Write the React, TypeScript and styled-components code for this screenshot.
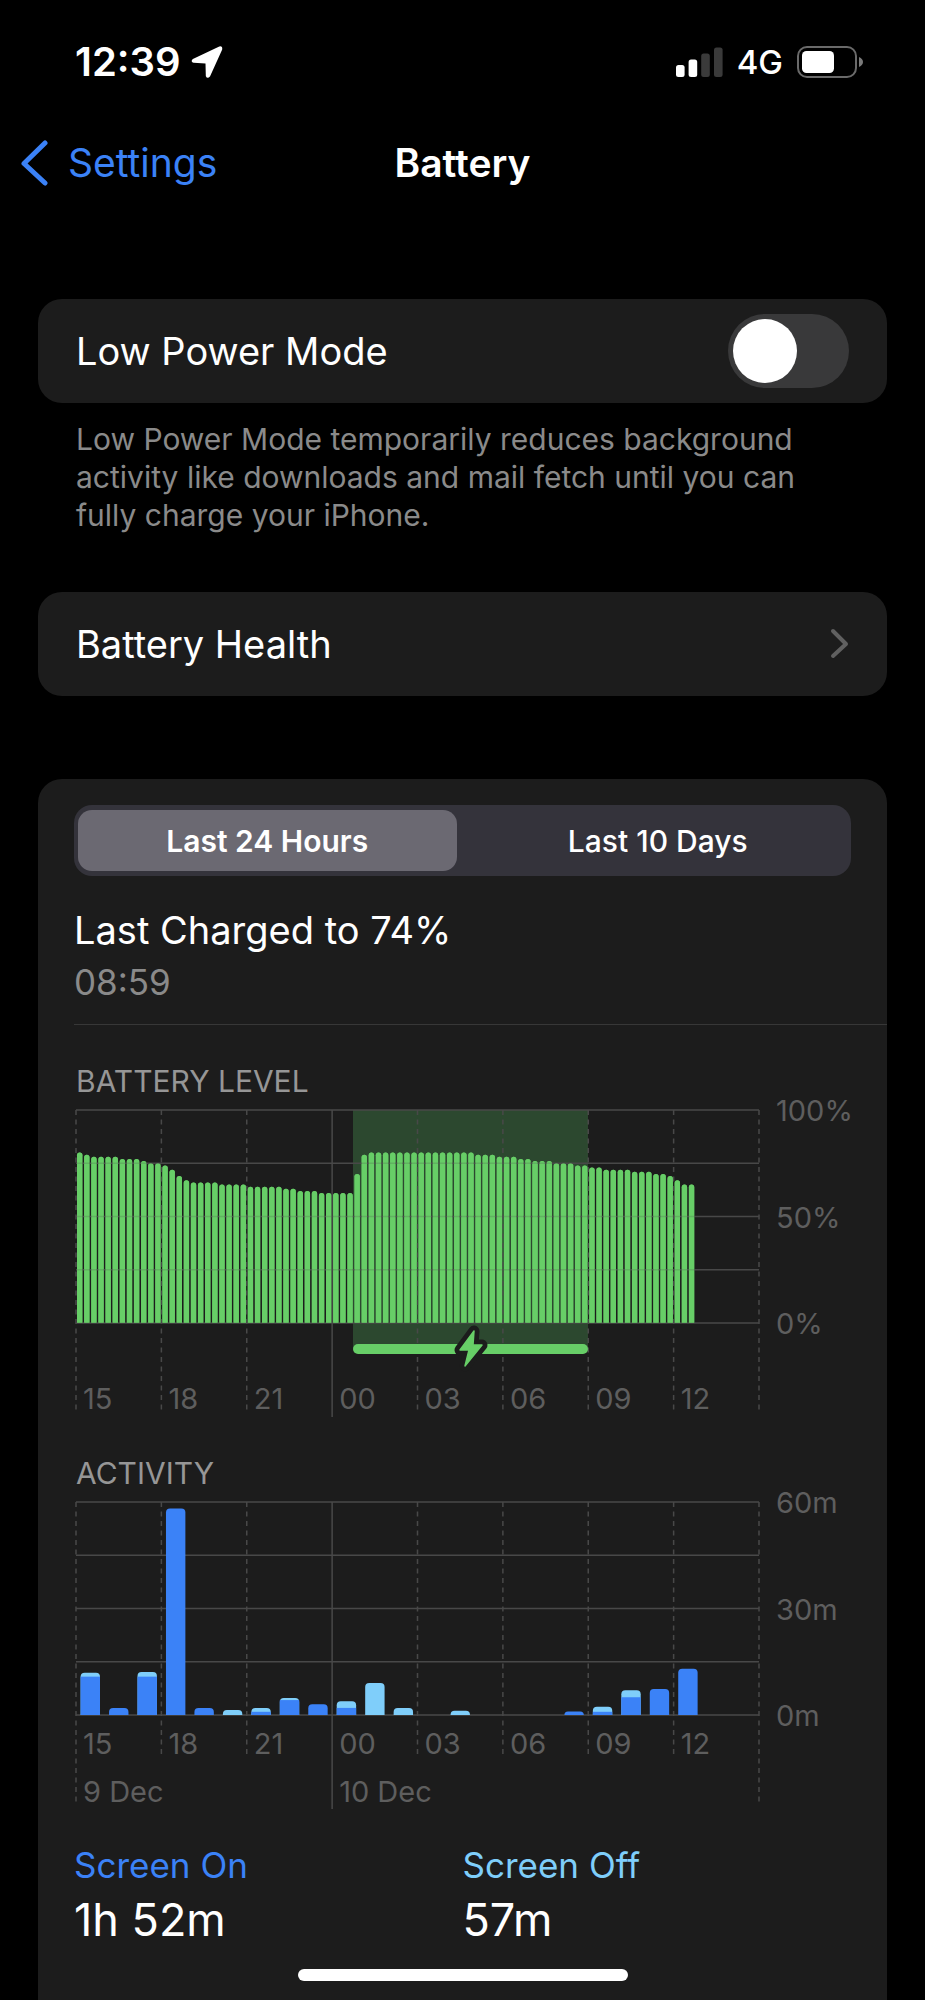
import React, { useState } from "react";
import styled, { createGlobalStyle } from "styled-components";

const color = {
  card: "#1c1c1c",
  blue: "#3b82f7",
  sky: "#7fcefa",
  green: "#67ce67",
  text: "#ffffff",
  secondary: "#8a8a8a",
  heading: "#969696",
  axis: "#5e5e5e",
  grid: "#484848",
};

const GlobalStyle = createGlobalStyle`
  *, *::before, *::after { box-sizing: border-box; }
  body {
    margin: 0;
    background: #000;
    color: ${color.text};
    font-family: Inter, "Liberation Sans", sans-serif;
  }
  button { font-family: inherit; }
`;

const Screen = styled.div`
  min-height: 100vh;
  display: flex;
  flex-direction: column;
`;

const StatusBar = styled.div`
  display: flex;
  align-items: center;
  justify-content: space-between;
  height: 86px;
  padding: 38px 61px 0 75px;
`;

const StatusGroup = styled.div<{ $gap: number }>`
  display: flex;
  align-items: center;
  gap: ${(p) => p.$gap}px;
`;

const Clock = styled.time`
  font-size: 40px;
  font-weight: 600;
  line-height: 48px;
`;

const Network = styled.span`
  font-size: 33px;
  font-weight: 500;
  line-height: 48px;
`;

const NavBar = styled.header`
  display: grid;
  grid-template-columns: 1fr auto 1fr;
  align-items: center;
  height: 60px;
  margin-top: 47px;
  padding: 0 20px;
`;

const BackLink = styled.a`
  display: flex;
  align-items: center;
  gap: 19px;
  color: ${color.blue};
  font-size: 39px;
  line-height: 48px;
  text-decoration: none;
`;

const PageTitle = styled.h1`
  margin: 0;
  font-size: 39px;
  font-weight: 600;
  line-height: 48px;
`;

const Main = styled.main`
  flex: 1;
  display: flex;
  flex-direction: column;
  padding: 106px 38px 0;
`;

const Row = styled.div`
  display: flex;
  align-items: center;
  justify-content: space-between;
  height: 104px;
  padding: 0 38px;
  border-radius: 24px;
  background: ${color.card};
  color: ${color.text};
  font-size: 38px;
  line-height: 48px;
  text-decoration: none;
`;

const Switch = styled.input`
  appearance: none;
  display: flex;
  align-items: center;
  width: 121px;
  height: 74px;
  margin: 0;
  padding: 5px;
  border-radius: 37px;
  background: #39393a;
  cursor: pointer;

  &::before {
    content: "";
    width: 64px;
    height: 64px;
    border-radius: 50%;
    background: #fff;
  }
  &:checked {
    justify-content: flex-end;
    background: ${color.green};
  }
`;

const Footnote = styled.p`
  margin: 17px 38px 58px;
  color: ${color.secondary};
  font-size: 30px;
  line-height: 38px;
`;

const UsageCard = styled.section`
  flex: 1;
  margin-top: 83px;
  padding: 26px 0 52px 36px;
  border-radius: 24px 24px 0 0;
  background: ${color.card};
`;

const Segmented = styled.div`
  display: flex;
  gap: 12px;
  height: 71px;
  margin-right: 36px;
  padding: 5px 4px;
  border-radius: 18px;
  background: #34333b;
`;

const Segment = styled.button<{ $active: boolean }>`
  flex: 1;
  border: 0;
  border-radius: 14px;
  background: ${(p) => (p.$active ? "#6b6972" : "transparent")};
  color: ${color.text};
  font-size: 30px;
  font-weight: ${(p) => (p.$active ? 600 : 500)};
  cursor: pointer;
`;

const ChargeSummary = styled.div`
  display: flex;
  flex-direction: column;
  gap: 6px;
  padding: 30px 0 20px;
  border-bottom: 1px solid #373737;
`;

const ChargeTitle = styled.h2`
  margin: 0;
  font-size: 38px;
  font-weight: 400;
  line-height: 48px;
`;

const ChargeTime = styled.time`
  color: ${color.secondary};
  font-size: 35px;
  line-height: 44px;
`;

const ChartBlock = styled.section`
  padding-top: 44px;
`;

const ChartTitle = styled.h3`
  margin: 0 0 0 2px;
  color: ${color.heading};
  font-size: 30px;
  font-weight: 400;
  line-height: 24px;
  text-transform: uppercase;
`;

const Chart = styled.svg`
  display: block;
  width: 100%;
  height: auto;
`;

const AxisText = styled.text`
  fill: ${color.axis};
  font-size: 29px;
  font-weight: 400;
`;

const Totals = styled.dl`
  display: grid;
  grid-template-columns: 1fr 1fr;
  margin: 34px 36px 0 0;
`;

const Total = styled.div`
  display: flex;
  flex-direction: column;
  gap: 5px;
`;

const TotalLabel = styled.dt<{ $tone: string }>`
  color: ${(p) => p.$tone};
  font-size: 35px;
  line-height: 44px;
`;

const TotalValue = styled.dd`
  margin: 0;
  font-size: 45px;
  line-height: 56px;
`;

const HomeIndicator = styled.div`
  position: fixed;
  bottom: 19px;
  left: 50%;
  width: 330px;
  height: 12px;
  border-radius: 6px;
  background: #fff;
  transform: translateX(-50%);
`;

/* Chart geometry, in view-box units */
const LEFT = 2;
const TOP = 17;
const PLOT_W = 683;
const PLOT_H = 213;
const BOTTOM = TOP + PLOT_H;
const STEP = PLOT_W / 8;
const HOURS = ["15", "18", "21", "00", "03", "06", "09", "12"];

const repeat = (value: number, count: number) => Array<number>(count).fill(value);

const levels = [
  80, 79, ...repeat(78, 4), ...repeat(77, 3), 76, 75, 75, 74, 72, 69, 67,
  ...repeat(66, 4), ...repeat(65, 4), ...repeat(64, 5), 63, 63,
  ...repeat(62, 3), ...repeat(61, 5), 70, 79, ...repeat(80, 15),
  ...repeat(79, 3), ...repeat(78, 3), 77, 77, ...repeat(76, 3),
  ...repeat(75, 3), 74, 74, 73, 73, ...repeat(72, 4), ...repeat(71, 3),
  70, 70, 69, 67, 65, 65,
];

/* Minutes with the screen on and off, keyed by hours since the start */
const activity = [
  { hour: 0, on: 10.8, off: 1.1 },
  { hour: 1, on: 2, off: 0 },
  { hour: 2, on: 10.8, off: 1.3 },
  { hour: 3, on: 58.2, off: 0 },
  { hour: 4, on: 2, off: 0 },
  { hour: 5, on: 0, off: 1.4 },
  { hour: 6, on: 0.9, off: 1.1 },
  { hour: 7, on: 4.2, off: 0.6 },
  { hour: 8, on: 3, off: 0 },
  { hour: 9, on: 2, off: 1.9 },
  { hour: 10, on: 0, off: 9 },
  { hour: 11, on: 0, off: 2 },
  { hour: 13, on: 0, off: 1.2 },
  { hour: 17, on: 1, off: 0 },
  { hour: 18, on: 0.9, off: 1.4 },
  { hour: 19, on: 5, off: 2 },
  { hour: 20, on: 7.3, off: 0 },
  { hour: 21, on: 13, off: 0 },
];

function topRounded(x: number, y: number, w: number, h: number, r: number) {
  const c = Math.min(r, h);
  return `M${x} ${y + h}V${y + c}Q${x} ${y} ${x + c} ${y}H${x + w - c}Q${x + w} ${y} ${x + w} ${y + c}V${y + h}Z`;
}

function GridLines({ ends }: { ends: number[] }) {
  return (
    <g stroke={color.grid} strokeWidth={1.5}>
      {[0, 1, 2, 3, 4].map((i) => {
        const y = TOP + (PLOT_H / 4) * i;
        return <line key={i} x1={LEFT} x2={LEFT + PLOT_W} y1={y} y2={y} />;
      })}
      {ends.map((end, i) => {
        const x = LEFT + STEP * i;
        return (
          <line
            key={i}
            x1={x}
            x2={x}
            y1={TOP}
            y2={end}
            strokeDasharray={i === 3 ? undefined : "5 4.5"}
          />
        );
      })}
    </g>
  );
}

function AxisLabels({ hoursY, values }: { hoursY: number; values: string[] }) {
  return (
    <g>
      {HOURS.map((hour, i) => (
        <AxisText key={hour} x={LEFT + STEP * i + 7} y={hoursY}>
          {hour}
        </AxisText>
      ))}
      {values.map((value, i) => (
        <AxisText key={value} x={LEFT + PLOT_W + 17} y={TOP + (PLOT_H / 2) * i + 11}>
          {value}
        </AxisText>
      ))}
    </g>
  );
}

const BOLT = "M400 238L386 257H395L391 273L408 252H399Z";

function LevelBars() {
  const pitch = STEP / 12;
  return (
    <g fill={color.green}>
      {levels.map((level, i) => {
        const h = (PLOT_H * level) / 100;
        return (
          <path key={i} d={topRounded(LEFT + 1 + pitch * i, BOTTOM - h, 5.4, h, 2.7)} />
        );
      })}
    </g>
  );
}

function BatteryLevelChart() {
  return (
    <Chart viewBox="0 0 813 324" role="img" aria-label="Battery level, last 24 hours">
      <rect x={279} y={TOP} width={235} height={238} fill="#2c482f" />
      <LevelBars />
      <GridLines ends={[320, 320, 320, 324, 320, 320, 320, 320, 320]} />
      <g opacity={0.8}>
        <LevelBars />
      </g>
      <rect x={279} y={251} width={235} height={10} rx={5} fill={color.green} />
      <path d={BOLT} fill={color.card} stroke={color.card} strokeWidth={11} strokeLinejoin="round" />
      <path d={BOLT} fill={color.green} stroke={color.green} strokeWidth={1.5} strokeLinejoin="round" />
      <AxisLabels hoursY={316} values={["100%", "50%", "0%"]} />
    </Chart>
  );
}

function ActivityChart() {
  const pitch = STEP / 3;
  return (
    <Chart viewBox="0 0 813 324" role="img" aria-label="Activity, last 24 hours">
      <GridLines ends={[320, 273, 273, 324, 273, 273, 273, 273, 320]} />
      {activity.map(({ hour, on, off }) => {
        const x = LEFT + 4.6 + pitch * hour;
        const onH = (PLOT_H * on) / 60;
        const offH = (PLOT_H * off) / 60;
        const total = onH + offH;
        return (
          <g key={hour}>
            <path
              d={topRounded(x, BOTTOM - total, 19.4, total, 4)}
              fill={off > 0 ? color.sky : color.blue}
            />
            {on > 0 && off > 0 && (
              <rect x={x} y={BOTTOM - onH} width={19.4} height={onH} fill={color.blue} />
            )}
          </g>
        );
      })}
      <AxisLabels hoursY={269} values={["60m", "30m", "0m"]} />
      <AxisText x={LEFT + 7} y={317}>9 Dec</AxisText>
      <AxisText x={LEFT + STEP * 3 + 7} y={317}>10 Dec</AxisText>
    </Chart>
  );
}

const LocationIcon = () => (
  <svg width="32" height="34" viewBox="0 0 32 34" aria-hidden="true">
    <path
      d="M28.8 2.6L2.4 15.2Q1.2 16.2 2.8 16.6L14.6 17.4Q15.6 17.5 15.7 18.4L16 30.8Q16.6 32.4 18 30.8L30 4.2Q30.4 2.2 28.8 2.6Z"
      fill="#fff"
      stroke="#fff"
      strokeWidth="2.4"
      strokeLinejoin="round"
    />
  </svg>
);

const SignalIcon = () => (
  <svg width="47" height="30" viewBox="0 0 47 30" aria-hidden="true">
    <rect x="0" y="18" width="8.6" height="12" rx="2.5" fill="#fff" />
    <rect x="12.6" y="12.5" width="8.6" height="17.5" rx="2.5" fill="#fff" />
    <rect x="25.2" y="6.5" width="8.6" height="23.5" rx="2.5" fill="#3a3a3a" />
    <rect x="38" y="0.5" width="8.6" height="29.5" rx="2.5" fill="#3a3a3a" />
  </svg>
);

const BatteryIcon = () => (
  <svg width="67" height="32" viewBox="0 0 67 32" aria-hidden="true">
    <rect x="1" y="1" width="58" height="30" rx="9" fill="none" stroke="#6a6a6a" strokeWidth="2" />
    <rect x="5" y="5" width="32" height="22" rx="4.5" fill="#fff" />
    <path d="M62 11Q66 13 66 16T62 21Z" fill="#7a7a7a" />
  </svg>
);

const BackIcon = () => (
  <svg width="29" height="46" viewBox="0 0 29 46" aria-hidden="true">
    <path d="M25 3L4 23.5L25 43" fill="none" stroke={color.blue} strokeWidth="5" strokeLinecap="round" strokeLinejoin="round" />
  </svg>
);

const DisclosureIcon = () => (
  <svg width="19" height="32" viewBox="0 0 19 32" aria-hidden="true">
    <path d="M3 3L16 16L3 28" fill="none" stroke="#606060" strokeWidth="4" strokeLinecap="round" strokeLinejoin="round" />
  </svg>
);

export default function App() {
  const [lowPower, setLowPower] = useState(false);
  const [range, setRange] = useState("Last 24 Hours");

  return (
    <>
      <GlobalStyle />
      <Screen>
        <StatusBar>
          <StatusGroup $gap={10}>
            <Clock>12:39</Clock>
            <LocationIcon />
          </StatusGroup>
          <StatusGroup $gap={14}>
            <SignalIcon />
            <Network>4G</Network>
            <BatteryIcon />
          </StatusGroup>
        </StatusBar>

        <NavBar>
          <BackLink href="#settings">
            <BackIcon />
            Settings
          </BackLink>
          <PageTitle>Battery</PageTitle>
        </NavBar>

        <Main>
          <Row>
            <label htmlFor="low-power">Low Power Mode</label>
            <Switch
              id="low-power"
              type="checkbox"
              role="switch"
              checked={lowPower}
              onChange={(e) => setLowPower(e.target.checked)}
            />
          </Row>
          <Footnote>
            Low Power Mode temporarily reduces background activity like
            downloads and mail fetch until you can fully charge your iPhone.
          </Footnote>

          <Row as="a" href="#battery-health">
            Battery Health
            <DisclosureIcon />
          </Row>

          <UsageCard>
            <Segmented role="group" aria-label="Time range">
              {["Last 24 Hours", "Last 10 Days"].map((label) => (
                <Segment
                  key={label}
                  type="button"
                  $active={range === label}
                  aria-pressed={range === label}
                  onClick={() => setRange(label)}
                >
                  {label}
                </Segment>
              ))}
            </Segmented>

            <ChargeSummary>
              <ChargeTitle>Last Charged to 74%</ChargeTitle>
              <ChargeTime>08:59</ChargeTime>
            </ChargeSummary>

            <ChartBlock>
              <ChartTitle>Battery Level</ChartTitle>
              <BatteryLevelChart />
            </ChartBlock>

            <ChartBlock>
              <ChartTitle>Activity</ChartTitle>
              <ActivityChart />
            </ChartBlock>

            <Totals>
              <Total>
                <TotalLabel $tone={color.blue}>Screen On</TotalLabel>
                <TotalValue>1h 52m</TotalValue>
              </Total>
              <Total>
                <TotalLabel $tone={color.sky}>Screen Off</TotalLabel>
                <TotalValue>57m</TotalValue>
              </Total>
            </Totals>
          </UsageCard>
        </Main>
      </Screen>
      <HomeIndicator />
    </>
  );
}
